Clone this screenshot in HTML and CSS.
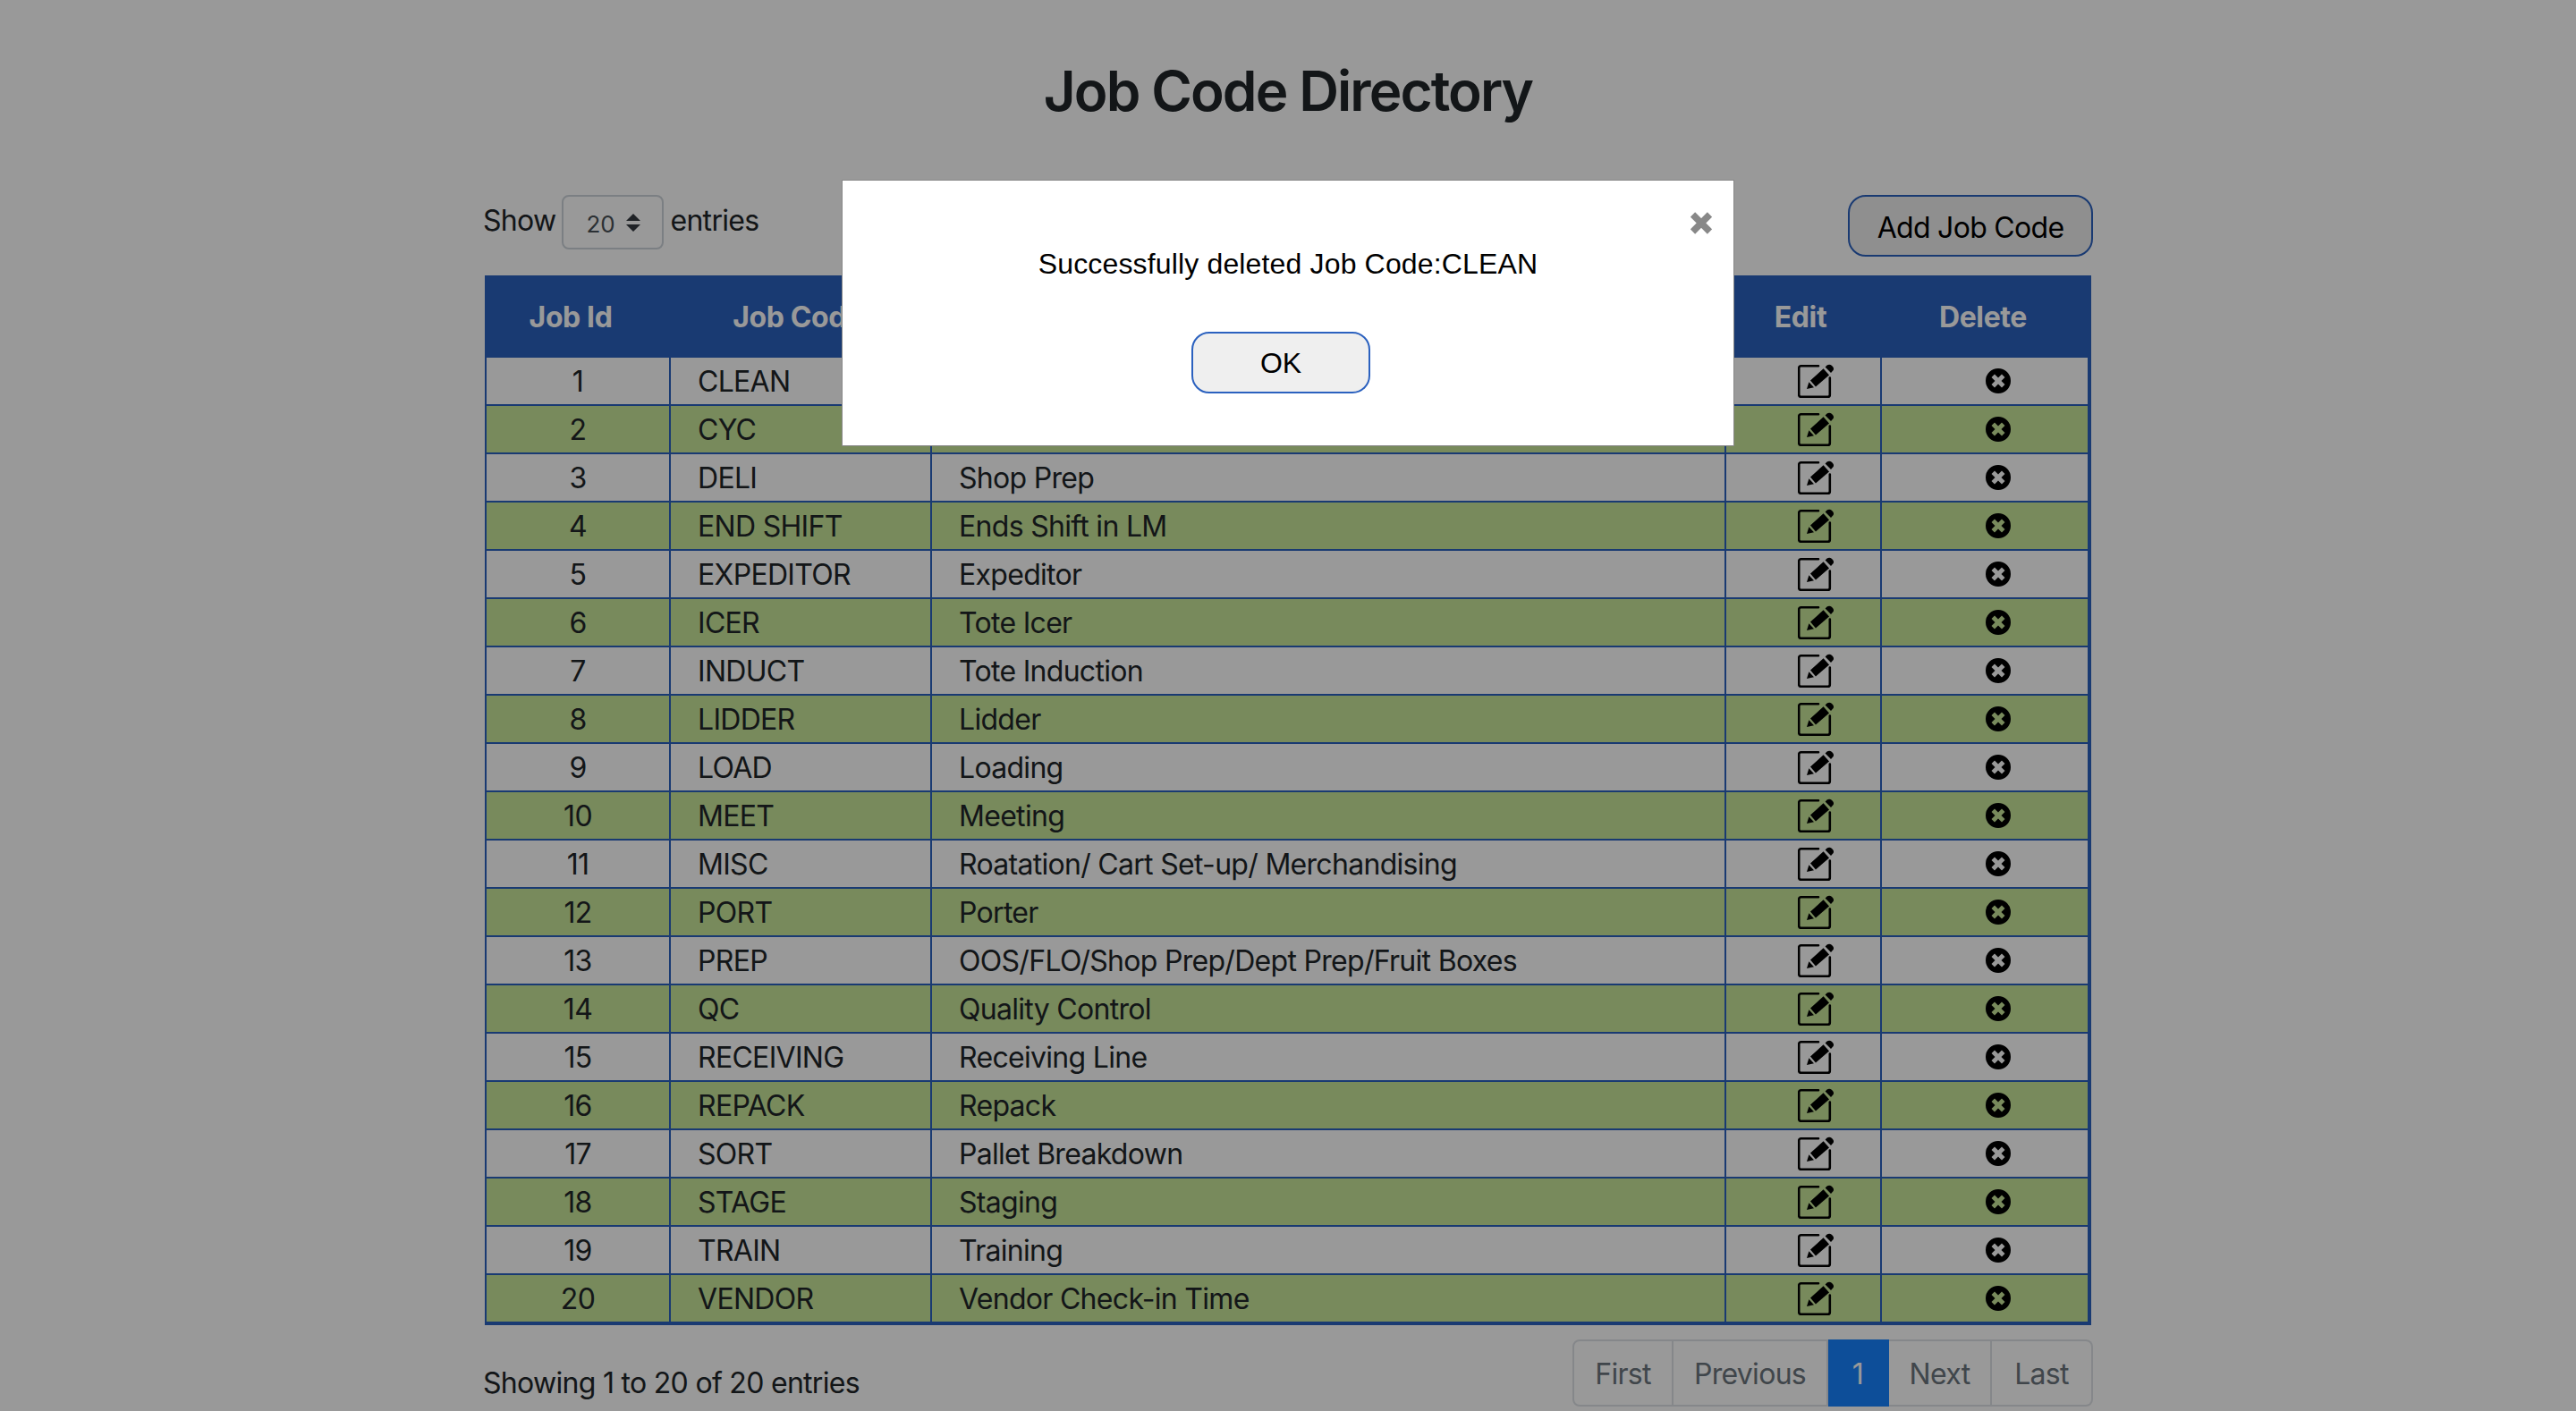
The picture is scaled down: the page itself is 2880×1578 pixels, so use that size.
FILE: index.html
```html
<!DOCTYPE html>
<html lang="en">
<head>
<meta charset="UTF-8" />
<meta name="viewport" content="width=device-width, initial-scale=1.0" />
<title>Job Code Directory</title>
<link rel="stylesheet" href="styles.css">
</head>
<body>
<svg class="icon-defs" width="0" height="0">
    <symbol id="icon-edit" viewBox="0 0 40 40">
        <path d="M23 4.2H3.6A2.4 2.4 0 0 0 1.2 6.6V36.4A2.4 2.4 0 0 0 3.6 38.8H33.4A2.4 2.4 0 0 0 35.8 36.4V17.5" fill="none" stroke="currentColor" stroke-width="2.6" stroke-linecap="round"/>
        <path d="M10 30L12.4 22.3L18 28.3Z"/>
        <path d="M14 20.6L28.6 7.2L35 14.4L20 27.6Z"/>
        <path d="M30.6 5.4L32.6 3.6C34.2 2.3 36.2 2.3 37.8 3.8L39 5C40.4 6.6 40.4 8.4 39 9.8L37 11.9Z"/>
    </symbol>
    <symbol id="icon-delete" viewBox="0 0 28 28">
        <path fill-rule="evenodd" d="M14 0A14 14 0 1 0 14 28A14 14 0 1 0 14 0ZM10 6.5L14 10.5L18 6.5L21.5 10L17.5 14L21.5 18L18 21.5L14 17.5L10 21.5L6.5 18L10.5 14L6.5 10Z"/>
    </symbol>
</svg>

<div class="page">
    <h1 class="title">Job Code Directory</h1>

    <div class="toolbar">
        <div class="length-control">
            <span>Show</span>
            <span class="select-wrap">
                <select class="length-select">
                    <option>20</option>
                </select>
                <svg class="select-arrows" width="16" height="20" viewBox="0 0 16 20"><path d="M8 0L16 8H0ZM0 12H16L8 20Z"/></svg>
            </span>
            <span>entries</span>
        </div>
        <button class="add-btn">Add Job Code</button>
    </div>

    <table class="job-table">
        <colgroup>
            <col class="col-id"><col class="col-code"><col class="col-desc"><col class="col-edit"><col class="col-delete">
        </colgroup>
        <thead>
            <tr>
                <th class="th-id">Job Id</th>
                <th>Job Code</th>
                <th>Description</th>
                <th>Edit</th>
                <th>Delete</th>
            </tr>
        </thead>
        <tbody>
            <tr><td class="cell-id">1</td><td>CLEAN</td><td>Cleaning</td><td class="cell-edit"><svg class="edit-icon"><use href="#icon-edit"/></svg></td><td class="cell-delete"><svg class="delete-icon"><use href="#icon-delete"/></svg></td></tr>
            <tr><td class="cell-id">2</td><td>CYC</td><td>Cycle Count</td><td class="cell-edit"><svg class="edit-icon"><use href="#icon-edit"/></svg></td><td class="cell-delete"><svg class="delete-icon"><use href="#icon-delete"/></svg></td></tr>
            <tr><td class="cell-id">3</td><td>DELI</td><td>Shop Prep</td><td class="cell-edit"><svg class="edit-icon"><use href="#icon-edit"/></svg></td><td class="cell-delete"><svg class="delete-icon"><use href="#icon-delete"/></svg></td></tr>
            <tr><td class="cell-id">4</td><td>END SHIFT</td><td>Ends Shift in LM</td><td class="cell-edit"><svg class="edit-icon"><use href="#icon-edit"/></svg></td><td class="cell-delete"><svg class="delete-icon"><use href="#icon-delete"/></svg></td></tr>
            <tr><td class="cell-id">5</td><td>EXPEDITOR</td><td>Expeditor</td><td class="cell-edit"><svg class="edit-icon"><use href="#icon-edit"/></svg></td><td class="cell-delete"><svg class="delete-icon"><use href="#icon-delete"/></svg></td></tr>
            <tr><td class="cell-id">6</td><td>ICER</td><td>Tote Icer</td><td class="cell-edit"><svg class="edit-icon"><use href="#icon-edit"/></svg></td><td class="cell-delete"><svg class="delete-icon"><use href="#icon-delete"/></svg></td></tr>
            <tr><td class="cell-id">7</td><td>INDUCT</td><td>Tote Induction</td><td class="cell-edit"><svg class="edit-icon"><use href="#icon-edit"/></svg></td><td class="cell-delete"><svg class="delete-icon"><use href="#icon-delete"/></svg></td></tr>
            <tr><td class="cell-id">8</td><td>LIDDER</td><td>Lidder</td><td class="cell-edit"><svg class="edit-icon"><use href="#icon-edit"/></svg></td><td class="cell-delete"><svg class="delete-icon"><use href="#icon-delete"/></svg></td></tr>
            <tr><td class="cell-id">9</td><td>LOAD</td><td>Loading</td><td class="cell-edit"><svg class="edit-icon"><use href="#icon-edit"/></svg></td><td class="cell-delete"><svg class="delete-icon"><use href="#icon-delete"/></svg></td></tr>
            <tr><td class="cell-id">10</td><td>MEET</td><td>Meeting</td><td class="cell-edit"><svg class="edit-icon"><use href="#icon-edit"/></svg></td><td class="cell-delete"><svg class="delete-icon"><use href="#icon-delete"/></svg></td></tr>
            <tr><td class="cell-id">11</td><td>MISC</td><td>Roatation/ Cart Set-up/ Merchandising</td><td class="cell-edit"><svg class="edit-icon"><use href="#icon-edit"/></svg></td><td class="cell-delete"><svg class="delete-icon"><use href="#icon-delete"/></svg></td></tr>
            <tr><td class="cell-id">12</td><td>PORT</td><td>Porter</td><td class="cell-edit"><svg class="edit-icon"><use href="#icon-edit"/></svg></td><td class="cell-delete"><svg class="delete-icon"><use href="#icon-delete"/></svg></td></tr>
            <tr><td class="cell-id">13</td><td>PREP</td><td>OOS/FLO/Shop Prep/Dept Prep/Fruit Boxes</td><td class="cell-edit"><svg class="edit-icon"><use href="#icon-edit"/></svg></td><td class="cell-delete"><svg class="delete-icon"><use href="#icon-delete"/></svg></td></tr>
            <tr><td class="cell-id">14</td><td>QC</td><td>Quality Control</td><td class="cell-edit"><svg class="edit-icon"><use href="#icon-edit"/></svg></td><td class="cell-delete"><svg class="delete-icon"><use href="#icon-delete"/></svg></td></tr>
            <tr><td class="cell-id">15</td><td>RECEIVING</td><td>Receiving Line</td><td class="cell-edit"><svg class="edit-icon"><use href="#icon-edit"/></svg></td><td class="cell-delete"><svg class="delete-icon"><use href="#icon-delete"/></svg></td></tr>
            <tr><td class="cell-id">16</td><td>REPACK</td><td>Repack</td><td class="cell-edit"><svg class="edit-icon"><use href="#icon-edit"/></svg></td><td class="cell-delete"><svg class="delete-icon"><use href="#icon-delete"/></svg></td></tr>
            <tr><td class="cell-id">17</td><td>SORT</td><td>Pallet Breakdown</td><td class="cell-edit"><svg class="edit-icon"><use href="#icon-edit"/></svg></td><td class="cell-delete"><svg class="delete-icon"><use href="#icon-delete"/></svg></td></tr>
            <tr><td class="cell-id">18</td><td>STAGE</td><td>Staging</td><td class="cell-edit"><svg class="edit-icon"><use href="#icon-edit"/></svg></td><td class="cell-delete"><svg class="delete-icon"><use href="#icon-delete"/></svg></td></tr>
            <tr><td class="cell-id">19</td><td>TRAIN</td><td>Training</td><td class="cell-edit"><svg class="edit-icon"><use href="#icon-edit"/></svg></td><td class="cell-delete"><svg class="delete-icon"><use href="#icon-delete"/></svg></td></tr>
            <tr><td class="cell-id">20</td><td>VENDOR</td><td>Vendor Check-in Time</td><td class="cell-edit"><svg class="edit-icon"><use href="#icon-edit"/></svg></td><td class="cell-delete"><svg class="delete-icon"><use href="#icon-delete"/></svg></td></tr>
        </tbody>
    </table>

    <div class="table-footer">
        <div class="info">Showing 1 to 20 of 20 entries</div>
        <div class="pagination">
            <a class="page-link page-first">First</a>
            <a class="page-link page-prev">Previous</a>
            <a class="page-link page-current">1</a>
            <a class="page-link page-next">Next</a>
            <a class="page-link page-last">Last</a>
        </div>
    </div>
</div>

<div class="overlay">
    <div class="modal">
        <button class="modal-close" aria-label="Close">
            <svg width="24" height="25" viewBox="0 0 24 25"><path d="M2.5 3L21.5 22M21.5 3L2.5 22" fill="none" stroke="currentColor" stroke-width="7.5"/></svg>
        </button>
        <p class="modal-text">Successfully deleted Job Code:CLEAN</p>
        <button class="modal-ok">OK</button>
    </div>
</div>
</body>
</html>
```

FILE: styles.css
```css
html, body {
    margin: 0;
    height: 100%;
    overflow: hidden;
}
body {
    font-family: Inter, "Noto Sans", sans-serif;
    font-size: 32px;
    letter-spacing: -0.7px;
    color: #212529;
    background: #fff;
}
.icon-defs {
    display: block;
}
.page {
    width: 1800px;
    margin: 0 auto;
}
.title {
    margin: 0;
    padding: 64px 0 78px;
    font-size: 62px;
    line-height: 76px;
    font-weight: 600;
    letter-spacing: -1.9px;
    text-align: center;
}
.toolbar {
    display: flex;
    justify-content: space-between;
    align-items: flex-start;
    height: 90px;
}
.length-control {
    display: flex;
    align-items: flex-start;
    gap: 7px;
    line-height: 58px;
}
.select-wrap {
    position: relative;
    display: block;
    height: 61px;
}
.length-select {
    appearance: none;
    display: block;
    box-sizing: border-box;
    width: 114px;
    height: 61px;
    padding: 4px 0 0 25px;
    font-family: inherit;
    font-size: 26px;
    color: #495057;
    background: #fff;
    border: 2px solid #ced4da;
    border-radius: 8px;
}
.select-arrows {
    position: absolute;
    left: 72px;
    top: 21px;
    fill: #343a40;
}
.add-btn {
    box-sizing: border-box;
    width: 274px;
    height: 69px;
    padding: 3px 0 0;
    font-family: inherit;
    font-size: 32px;
    letter-spacing: -0.7px;
    color: #000;
    background: #efefef;
    border: 2px solid #2b61bf;
    border-radius: 20px;
}

.job-table {
    table-layout: fixed;
    width: 1796px;
    margin: 0 2px;
    border-collapse: separate;
    border-spacing: 0;
}
.col-id { width: 208px; }
.col-code { width: 292px; }
.col-desc { width: 888px; }
.col-edit { width: 174px; }
.col-delete { width: 234px; }
.job-table th {
    box-sizing: border-box;
    height: 92px;
    padding: 0 8px 0 0;
    font-weight: 700;
    letter-spacing: -0.4px;
    color: #fff;
    background: #2b61bf;
}
.job-table th.th-id {
    padding-right: 16px;
}
.job-table td {
    box-sizing: border-box;
    height: 54px;
    padding: 2px 0 0 30px;
    line-height: 30px;
    border-right: 2px solid #2b61bf;
    border-bottom: 2px solid #2b61bf;
}
.job-table td:first-child {
    border-left: 2px solid #2b61bf;
}
.job-table td:last-child {
    border-right-width: 4px;
}
.job-table tbody tr:nth-child(even) td {
    background: #c8e69a;
}
.job-table tbody tr:last-child td {
    height: 56px;
    border-bottom-width: 4px;
}
.job-table td.cell-id {
    padding: 2px 0 0;
    text-align: center;
}
.job-table td.cell-edit {
    padding: 0 0 2px 80px;
}
.job-table td.cell-delete {
    padding: 0 0 0 116px;
}
.edit-icon, .delete-icon {
    display: block;
    fill: #000;
    color: #000;
}
.edit-icon {
    width: 40px;
    height: 40px;
}
.delete-icon {
    width: 28px;
    height: 28px;
}

.table-footer {
    display: flex;
    justify-content: space-between;
    align-items: flex-start;
    margin-top: 16px;
}
.info {
    padding-top: 25px;
    line-height: 48px;
}
.pagination {
    display: flex;
    height: 75px;
    box-sizing: border-box;
    margin-left: -1px;
}
.page-link {
    display: flex;
    align-items: center;
    justify-content: center;
    box-sizing: border-box;
    padding-top: 1px;
    color: #6c757d;
    background: #fff;
    border: 2px solid #dee2e6;
    border-left-width: 0;
}
.page-first {
    width: 113px;
    border-left-width: 2px;
    border-radius: 8px 0 0 8px;
}
.page-prev { width: 173px; }
.page-current {
    width: 68px;
    color: #fff;
    background: #1682ff;
    border-color: #1682ff;
}
.page-next { width: 115px; }
.page-last {
    width: 113px;
    border-radius: 0 8px 8px 0;
}

.overlay {
    position: fixed;
    top: 0;
    left: 0;
    width: 100%;
    height: 100%;
    display: flex;
    justify-content: center;
    align-items: flex-start;
    padding-top: 201px;
    box-sizing: border-box;
    background: rgba(0,0,0,0.4);
}
.modal {
    position: relative;
    box-sizing: border-box;
    width: 998px;
    height: 298px;
    padding-top: 74px;
    display: flex;
    flex-direction: column;
    align-items: center;
    font-family: "Liberation Sans", Arial, sans-serif;
    letter-spacing: 0.15px;
    color: #000;
    background: #fff;
    border: 1px solid #888;
}
.modal-close {
    position: absolute;
    top: 35px;
    right: 24px;
    display: block;
    padding: 0;
    color: #888;
    background: none;
    border: none;
}
.modal-close svg {
    display: block;
}
.modal-text {
    margin: 0;
    line-height: 38px;
}
.modal-ok {
    box-sizing: border-box;
    width: 200px;
    height: 69px;
    margin: 57px 16px 0 0;
    padding: 2px 0 0;
    font-family: inherit;
    font-size: 32px;
    color: #000;
    background: #efefef;
    border: 2px solid #2b61bf;
    border-radius: 20px;
}
```
